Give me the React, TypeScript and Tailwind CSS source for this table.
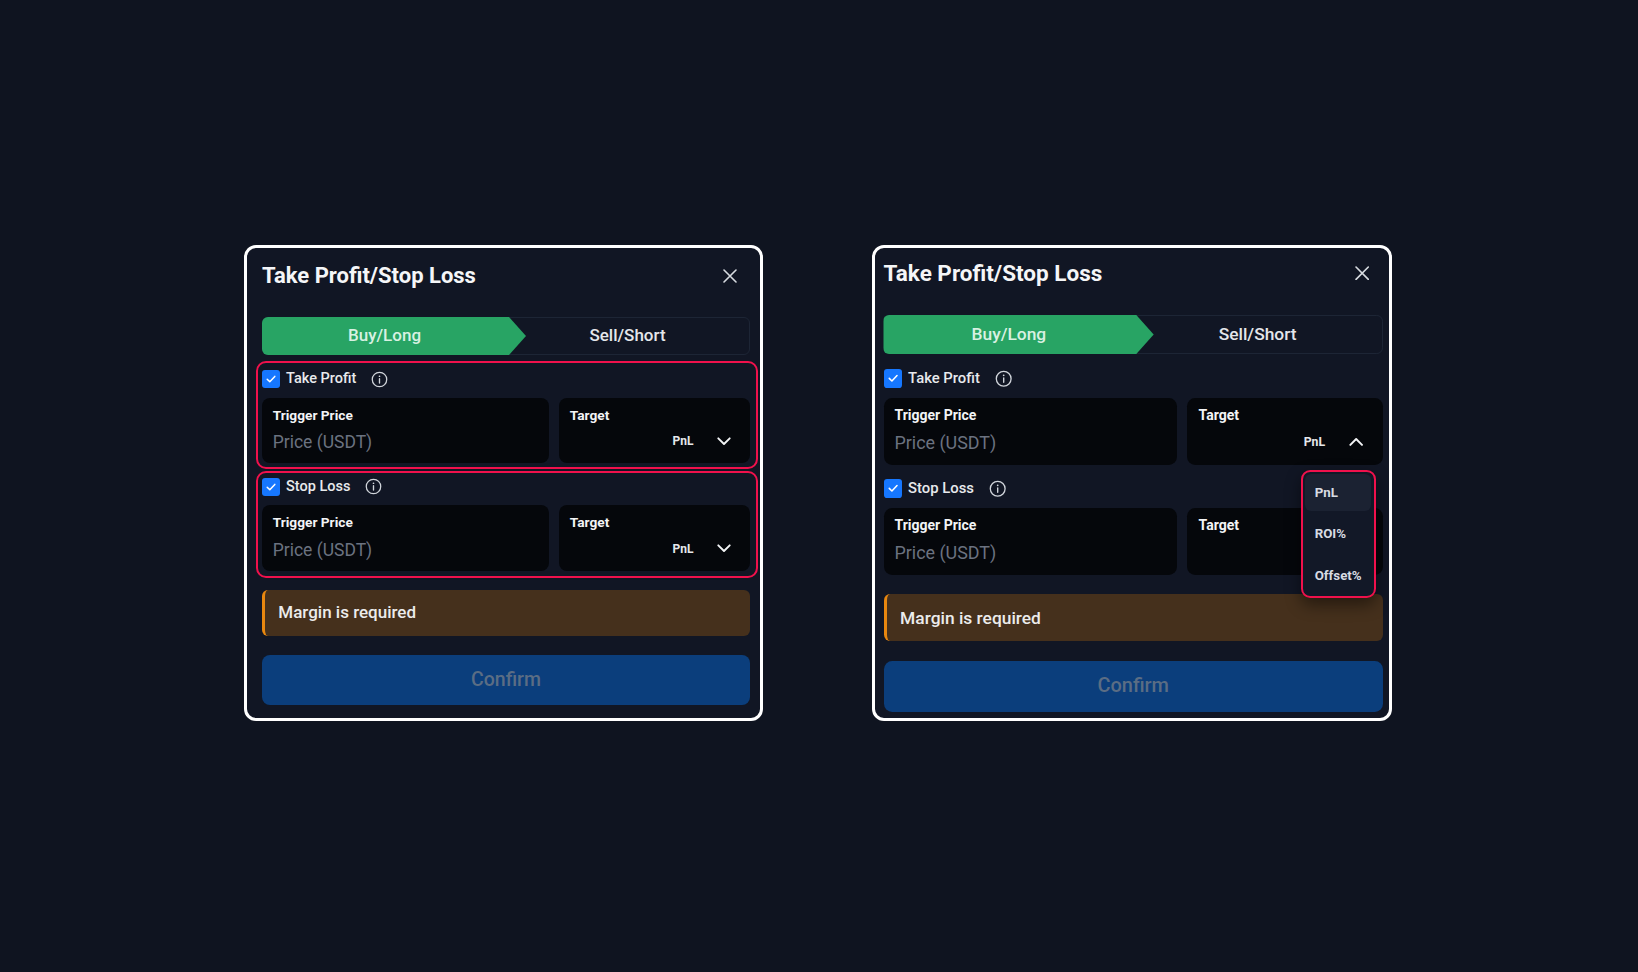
import React from "react";

const XIcon = () => (
  <svg width="14" height="14" viewBox="0 0 14 14" fill="none" className="mr-[13.5px] shrink-0">
    <path d="M1 1L13 13M13 1L1 13" stroke="#d7dbe0" strokeWidth="1.6" strokeLinecap="round" />
  </svg>
);

const Check = () => (
  <span className="w-[18px] h-[18px] rounded-[3px] bg-[#1677ff] flex items-center justify-center shrink-0">
    <svg width="12" height="12" viewBox="0 0 12 12" fill="none">
      <path d="M2.2 6.2L4.8 8.8L9.8 3.4" stroke="white" strokeWidth="1.5" strokeLinecap="round" strokeLinejoin="round" />
    </svg>
  </span>
);

const Info = () => (
  <svg width="17" height="17" viewBox="0 0 24 24" fill="none" className="ml-[15px] shrink-0">
    <circle cx="12" cy="12" r="10.2" stroke="#d1d5db" strokeWidth="1.8" />
    <path d="M12 10.8V17" stroke="#d1d5db" strokeWidth="1.9" strokeLinecap="round" />
    <circle cx="12" cy="7.4" r="1.2" fill="#d1d5db" />
  </svg>
);

const Chevron = ({ up }: { up?: boolean }) => (
  <svg width="14" height="9" viewBox="0 0 14 9" fill="none" className="shrink-0">
    <path
      d={up ? "M1.3 7.7L7 2L12.7 7.7" : "M1.3 1.3L7 7L12.7 1.3"}
      stroke="#f3f4f6"
      strokeWidth="1.9"
      strokeLinecap="round"
      strokeLinejoin="round"
    />
  </svg>
);

const Dropdown = () => (
  <div className="absolute z-20 right-[6.4px] top-[calc(100%+5.6px)] w-[73.3px] border-2 border-[#f0114c] rounded-[9px] bg-[#121827] pl-[2px] pr-[3.5px] pt-[2px] pb-[1.5px] flex flex-col gap-[4.5px] shadow-[0_6px_16px_rgba(0,0,0,0.45)]">
    <div className="h-[36px] rounded-[6px] bg-[#1b2232] flex items-center pl-[9px] text-[13px] font-bold text-[#d8dce3]">PnL</div>
    <div className="h-[36px] rounded-[6px] flex items-center pl-[9px] text-[13px] font-bold text-[#d8dce3]">ROI%</div>
    <div className="h-[36px] rounded-[6px] flex items-center pl-[9px] text-[13px] font-bold text-[#d8dce3]">Offset%</div>
  </div>
);

const Fields = ({ up, dropdown, mt }: { up?: boolean; dropdown?: boolean; mt: string }) => (
  <div className={`${mt} grid grid-cols-[3fr_2fr] gap-[10px] h-[65.5px]`}>
    <div className="min-w-0 bg-[#05070b] rounded-[8px] pl-[10.7px] pt-[9px]">
      <div className="text-[13.7px] leading-[16px] font-bold text-[#f3f4f6]">Trigger Price</div>
      <div className="mt-[8.8px] text-[17.5px] leading-[22px] text-[#6b7280]">Price (USDT)</div>
    </div>
    <div className="min-w-0 relative bg-[#05070b] rounded-[8px] pl-[11px] pt-[9px]">
      <div className="text-[13.7px] leading-[16px] font-bold text-[#f3f4f6]">Target</div>
      <div className="mt-[8.5px] h-[20px] flex items-center justify-end gap-[23.5px] pr-[19px]">
        <span className="text-[12px] leading-[14px] font-bold text-[#e5e7eb]">PnL</span>
        <Chevron up={up} />
      </div>
      {dropdown && <Dropdown />}
    </div>
  </div>
);

const Content = ({ annotate, open }: { annotate?: boolean; open?: boolean }) => (
  <div className="w-[488px]">
    <div className="flex items-center justify-between h-[28px]">
      <div className="text-[22px] leading-[28px] font-bold text-[#f5f6f8]">Take Profit/Stop Loss</div>
      <XIcon />
    </div>

    <div className="mt-[27px] relative h-[38px] rounded-[6px] border border-[#1d2535] flex">
      <div className="absolute -left-px -top-px -bottom-px w-[264px] bg-[#28a464] rounded-l-[6px] [clip-path:polygon(0_0,calc(100%-17px)_0,100%_50%,calc(100%-17px)_100%,0_100%)]" />
      <div className="relative flex-1 flex items-center justify-center text-[17px] font-medium text-[#d8f1e2]">Buy/Long</div>
      <div className="relative flex-1 flex items-center justify-center text-[17px] font-medium text-[#e5e7eb]">Sell/Short</div>
    </div>

    <div className="relative mt-[15px]">
      {annotate && (
        <div className="absolute pointer-events-none -left-[6px] -right-[7.7px] -top-[9px] -bottom-[6px] border-2 border-[#f0114c] rounded-[10px]" />
      )}
      <div className="flex items-center h-[18px]">
        <Check />
        <span className="ml-[6px] text-[14.5px] leading-[18px] font-medium text-[#e8eaed]">Take Profit</span>
        <Info />
      </div>
      <Fields mt="mt-[9.7px]" up={open} dropdown={open} />
    </div>

    <div className="relative mt-[14.4px]">
      {annotate && (
        <div className="absolute pointer-events-none -left-[6px] -right-[7.7px] -top-[6.7px] -bottom-[7.6px] border-2 border-[#f0114c] rounded-[10px]" />
      )}
      <div className="flex items-center h-[18px]">
        <Check />
        <span className="ml-[6px] text-[14.5px] leading-[18px] font-medium text-[#e8eaed]">Stop Loss</span>
        <Info />
      </div>
      <Fields mt="mt-[9.6px]" />
    </div>

    <div className="mt-[19.3px] h-[46px] rounded-[6px] bg-[#45301c] border-l-[3px] border-[#e8870f] flex items-center pl-[13.3px] text-[17px] font-medium text-[#ececec]">
      Margin is required
    </div>

    <div className="mt-[19px] h-[50px] rounded-[8px] bg-[#0b3e7c] flex items-center justify-center text-[19.5px] font-medium text-[#5b6d84]">
      Confirm
    </div>
  </div>
);

export default function App() {
  return (
    <div className="w-full h-[972px] overflow-hidden bg-[#0f1420] flex items-start pl-[243.5px] pt-[245px] gap-[109px] [font-family:Roboto,sans-serif]">
      <div className="shrink-0 w-[519.5px] h-[476px] border-[3px] border-white rounded-[12px] bg-[#111624] pl-[15.5px] pt-[14px]">
        <Content annotate />
      </div>
      <div className="shrink-0 w-[520px] h-[476px] border-[3px] border-white rounded-[12px] bg-[#111624] pl-[8.5px] pt-[10.7px]">
        <div className="[zoom:1.0235]">
          <Content open />
        </div>
      </div>
    </div>
  );
}
